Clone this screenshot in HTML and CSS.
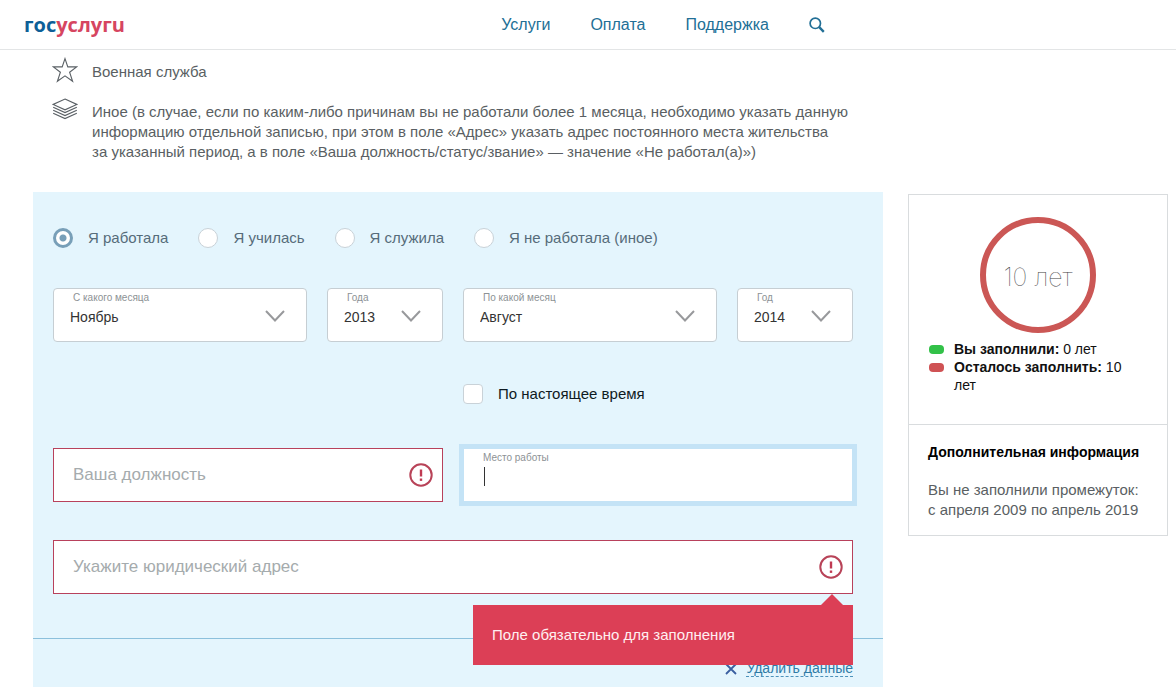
FILE: index.html
```html
<!DOCTYPE html>
<html lang="ru">
<head>
<meta charset="utf-8">
<meta name="viewport" content="width=device-width, initial-scale=1">
<title>Госуслуги</title>
<link rel="stylesheet" href="styles.css">
</head>
<body>
<header class="header">
  <a class="logo" href="#"><span class="logo-blue">гос</span><span class="logo-red">услугu</span></a>
  <nav class="nav">
    <a href="#">Услуги</a>
    <a href="#">Оплата</a>
    <a href="#">Поддержка</a>
    <button class="search" type="button" aria-label="Поиск">
      <svg width="16" height="16" viewBox="0 0 16 16" fill="none" stroke="currentColor"><circle cx="6.3" cy="6.3" r="5.2" stroke-width="1.7"/><path d="M10.2 10.2 L14.8 14.8" stroke-width="2.4"/></svg>
    </button>
  </nav>
</header>

<main class="page">
  <ul class="hints">
    <li class="hint">
      <svg class="hint-icon" width="26" height="26" viewBox="0 0 26 26" fill="none" stroke="#5a6065" stroke-width="1.1" stroke-linejoin="miter"><path d="M13 1.600 L15.800 9.900 L24.600 9.900 L17.600 15.300 L20.600 24.200 L13 18.800 L5.400 24.200 L8.400 15.300 L1.400 9.900 L10.200 9.900 Z"/></svg>
      <span>Военная служба</span>
    </li>
    <li class="hint">
      <svg class="hint-icon" width="26" height="22" viewBox="0 0 26 22" fill="none" stroke="#5a6065" stroke-width="1.1"><path d="M13 1 L24.800 6.400 L13 11.800 L1.200 6.400 Z"/><path d="M1.200 9.200 L13 14.600 L24.800 9.200"/><path d="M1.200 12.200 L13 17.600 L24.800 12.200"/><path d="M1.200 15.200 L13 20.600 L24.800 15.200"/></svg>
      <span>Иное (в случае, если по каким-либо причинам вы не работали более 1 месяца, необходимо указать данную информацию отдельной записью, при этом в поле «Адрес» указать адрес постоянного места жительства за&nbsp;указанный период, а в поле «Ваша должность/статус/звание» — значение «Не работал(а)»)</span>
    </li>
  </ul>

  <div class="columns">
    <form class="panel">
      <div class="radios">
        <label class="choice"><input type="radio" name="kind" checked>Я работала</label>
        <label class="choice"><input type="radio" name="kind">Я училась</label>
        <label class="choice"><input type="radio" name="kind">Я служила</label>
        <label class="choice"><input type="radio" name="kind">Я не работала (иное)</label>
      </div>

      <div class="dates">
        <div class="field">
          <label for="from-month">С какого месяца</label>
          <select id="from-month"><option>Ноябрь</option></select>
          <svg class="chevron" width="20" height="12" viewBox="0 0 20 12"><path d="M1 1 L10 10.500 L19 1"/></svg>
        </div>
        <div class="field">
          <label for="from-year">Года</label>
          <select id="from-year"><option>2013</option></select>
          <svg class="chevron" width="20" height="12" viewBox="0 0 20 12"><path d="M1 1 L10 10.500 L19 1"/></svg>
        </div>
        <div class="field">
          <label for="to-month">По какой месяц</label>
          <select id="to-month"><option>Август</option></select>
          <svg class="chevron" width="20" height="12" viewBox="0 0 20 12"><path d="M1 1 L10 10.500 L19 1"/></svg>
        </div>
        <div class="field">
          <label for="to-year">Год</label>
          <select id="to-year"><option>2014</option></select>
          <svg class="chevron" width="20" height="12" viewBox="0 0 20 12"><path d="M1 1 L10 10.500 L19 1"/></svg>
        </div>
      </div>

      <div class="halves present">
        <label class="choice choice-dark"><input type="checkbox">По настоящее время</label>
      </div>

      <div class="halves">
        <div class="textbox invalid">
          <input type="text" placeholder="Ваша должность" aria-label="Ваша должность">
          <svg class="alert" width="24" height="24" viewBox="0 0 24 24"><circle cx="12" cy="12" r="10.700" fill="none" stroke="#b84358" stroke-width="2"/><path d="M12 6.500 V13.500" stroke="#c03a52" stroke-width="2.400"/><path d="M12 15.500 V17.900" stroke="#c03a52" stroke-width="2.400"/></svg>
        </div>
        <div class="textbox focused">
          <label for="workplace">Место работы</label>
          <div class="entry"><span class="caret"></span><input id="workplace" type="text"></div>
        </div>
      </div>

      <div class="address">
        <div class="textbox invalid">
          <input type="text" placeholder="Укажите юридический адрес" aria-label="Укажите юридический адрес">
          <svg class="alert" width="24" height="24" viewBox="0 0 24 24"><circle cx="12" cy="12" r="10.700" fill="none" stroke="#b84358" stroke-width="2"/><path d="M12 6.500 V13.500" stroke="#c03a52" stroke-width="2.400"/><path d="M12 15.500 V17.900" stroke="#c03a52" stroke-width="2.400"/></svg>
        </div>
        <div class="tooltip" role="alert">Поле обязательно для заполнения</div>
      </div>

      <div class="panel-footer">
        <svg width="12" height="12" viewBox="0 0 12 12" stroke="#3a5fa0" stroke-width="1.800"><path d="M1 1 L11 11 M11 1 L1 11"/></svg>
        <a class="remove" href="#">Удалить данные</a>
      </div>
    </form>

    <aside class="sidebar">
      <section class="progress">
        <div class="ring">10 лет</div>
        <ul class="legend">
          <li><span class="swatch green"></span><span><b>Вы заполнили:</b> 0 лет</span></li>
          <li><span class="swatch red"></span><span><b>Осталось заполнить:</b> 10 лет</span></li>
        </ul>
      </section>
      <section class="info">
        <h2>Дополнительная информация</h2>
        <p>Вы не заполнили промежуток: с&nbsp;апреля 2009 по апрель 2019</p>
      </section>
    </aside>
  </div>
</main>
</body>
</html>
```
FILE: styles.css
```css
* {
  box-sizing: border-box;
}

body {
  margin: 0;
  background: #fff;
  color: #5a5f63;
  font: 15px/20px "Liberation Sans", Arial, sans-serif;
}

ul {
  margin: 0;
  padding: 0;
  list-style: none;
}

input,
select,
button {
  margin: 0;
  font: inherit;
}

.header {
  display: grid;
  grid-template-columns: 11fr 15fr;
  align-items: center;
  height: 50px;
  padding: 0 24px;
  border-bottom: 1px solid #e3e5e6;
}

.logo {
  font: 700 20px/24px "Open Sans", sans-serif;
  text-decoration: none;
}

.logo-blue {
  color: #0d5f97;
}

.logo-red {
  color: #d64560;
}

.nav {
  display: flex;
  align-items: center;
  gap: 40px;
  font-size: 16px;
}

.nav a,
.search {
  color: #226f96;
  text-decoration: none;
}

.search {
  display: flex;
  padding: 0;
  border: 0;
  background: none;
}

.page {
  padding: 7px 8px 0 33px;
}

.hints {
  display: grid;
  gap: 15px;
  max-width: 820px;
  padding-left: 19px;
}

.hint {
  display: grid;
  grid-template-columns: 26px 1fr;
  gap: 14px;
}

.hint > span {
  padding-top: 5px;
}

.hint + .hint > span {
  padding-top: 4px;
}

.columns {
  display: grid;
  grid-template-columns: 1fr 260px;
  align-items: start;
  gap: 25px;
  margin-top: 30px;
}

.panel {
  padding: 36px 0 10px;
  background: #e4f5fd;
}

.radios,
.dates,
.halves,
.address {
  margin: 0 30px 0 20px;
}

.radios {
  display: flex;
  gap: 30px;
}

.choice {
  display: flex;
  align-items: center;
  gap: 15px;
  color: #566c7a;
}

.choice-dark {
  grid-column: 2;
  color: #0e1a22;
}

.choice input {
  appearance: none;
  width: 20px;
  height: 20px;
  border: 1px solid #c9d2d8;
  background: #fff;
}

.choice input[type="radio"] {
  border-radius: 50%;
}

.choice input[type="radio"]:checked {
  border: 3px solid #789fb8;
  background: radial-gradient(circle, #789fb8 3px, #fff 4px);
}

.choice input[type="checkbox"] {
  border-radius: 4px;
}

.dates {
  display: grid;
  grid-template-columns: 1fr 116px 1fr 116px;
  gap: 20px;
  margin-top: 40px;
}

.field {
  display: grid;
  grid-template-rows: 18px 18px;
  height: 54px;
  border: 1px solid #c6ced3;
  border-radius: 4px;
  background: #fff;
}

.field label,
.textbox label {
  padding-left: 19px;
  color: #8d9295;
  font-size: 10px;
  line-height: 18px;
}

.field select,
.chevron {
  grid-area: 2 / 1;
}

.field select {
  appearance: none;
  width: 100%;
  padding: 0 48px 0 16px;
  border: 0;
  background: transparent;
  color: #333;
  font-size: 14px;
}

.chevron {
  align-self: center;
  justify-self: end;
  margin-right: 21px;
  fill: none;
  stroke: #98999c;
  stroke-width: 2;
  pointer-events: none;
}

.halves {
  display: grid;
  grid-template-columns: 1fr 1fr;
  gap: 20px;
  margin-top: 44px;
}

.present {
  margin-top: 42px;
}

.textbox {
  height: 54px;
  border: 1px solid #b8415c;
  background: #fff;
}

.textbox input {
  flex: 1;
  min-width: 0;
  padding: 0;
  border: 0;
  outline: 0;
  background: transparent;
  color: #333;
  font-size: 17px;
}

.textbox input::placeholder {
  color: #a5abad;
  opacity: 1;
}

.invalid {
  display: flex;
  align-items: center;
  padding: 0 9px 0 19px;
}

.focused {
  border-color: #c4e3f6;
  box-shadow: 0 0 0 4px #c4e3f6;
}

.focused label {
  display: block;
}

.entry {
  display: flex;
  height: 19px;
  padding: 0 20px;
}

.caret {
  width: 1px;
  background: #333;
}

.address {
  position: relative;
  margin-top: 38px;
}

.tooltip {
  position: absolute;
  top: calc(100% + 11px);
  right: 0;
  width: 380px;
  max-width: 100%;
  padding: 20px 19px;
  background: #dc3f56;
  color: #ffeff1;
}

.tooltip::before {
  content: "";
  position: absolute;
  right: 10px;
  bottom: 100%;
  border: 11px solid transparent;
  border-top: 0;
  border-bottom-color: #dc3f56;
}

.panel-footer {
  display: flex;
  align-items: center;
  justify-content: flex-end;
  gap: 9px;
  margin-top: 44px;
  padding: 21px 30px 0 0;
  border-top: 1px solid #8cc0dc;
}

.remove {
  border-bottom: 1px dashed #4c93bb;
  color: #2f7ba6;
  font-size: 14px;
  line-height: 16px;
  text-decoration: none;
}

.sidebar {
  margin-top: 2px;
  border: 1px solid #d9dcde;
}

.progress {
  padding: 22px 20px 30px;
}

.ring {
  display: flex;
  align-items: center;
  justify-content: center;
  width: 116px;
  height: 116px;
  margin: 0 auto 7px;
  padding-top: 4px;
  border: 6px solid #cb5755;
  border-radius: 50%;
  color: #444;
  font: 100 25px/30px Inter, sans-serif;
}

.legend {
  color: #111;
  font-size: 14px;
  line-height: 18px;
}

.legend li {
  display: flex;
  gap: 10px;
}

.swatch {
  flex: none;
  width: 15px;
  height: 9px;
  margin-top: 5px;
  border-radius: 4px;
}

.green {
  background: #32c148;
}

.red {
  background: #cf5254;
}

.info {
  padding: 17px 19px 15px;
  border-top: 1px solid #d9dcde;
}

.info h2 {
  margin: 0 0 18px;
  color: #000;
  font-size: 14px;
  line-height: 20px;
}

.info p {
  margin: 0;
}
```
